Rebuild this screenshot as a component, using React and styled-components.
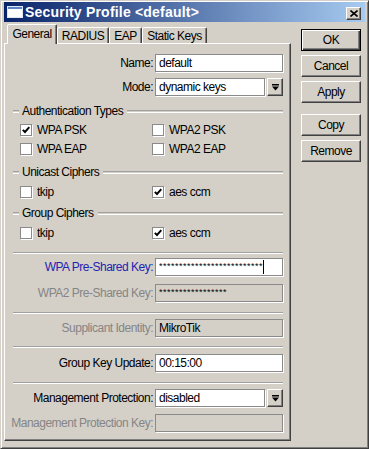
import React from 'react';
import styled, { createGlobalStyle } from 'styled-components';

const GlobalStyle = createGlobalStyle`
  html, body {
    margin: 0;
    padding: 0;
    background: #d4d0c8;
  }
  body {
    font-family: "Liberation Sans", Arial, sans-serif;
    font-size: 12px;
    letter-spacing: -0.5px;
    color: #000;
  }
`;

const Window = styled.div`
  width: 369px;
  height: 449px;
  box-sizing: border-box;
  background: #d4d0c8;
  border: 1px solid;
  border-color: #d4d0c8 #404040 #404040 #d4d0c8;
  box-shadow: inset 1px 1px 0 #fff, inset -1px -1px 0 #808080;
  padding: 1px 3px 3px 3px;
  display: flex;
  flex-direction: column;
`;

const TitleBar = styled.div`
  height: 20px;
  display: flex;
  align-items: center;
  padding-left: 3px;
  padding-right: 4px;
  background: linear-gradient(to right, #0a246a, #a6caf0);
`;

const TitleText = styled.span`
  flex: 1;
  margin-left: 2px;
  color: #fff;
  font-weight: bold;
  font-size: 14px;
  letter-spacing: 0.2px;
`;

const CloseButton = styled.div`
  width: 15px;
  height: 13px;
  box-sizing: border-box;
  margin-top: 3px;
  background: #d4d0c8;
  border: 1px solid;
  border-color: #fff #404040 #404040 #fff;
  box-shadow: inset -1px -1px 0 #808080;
  display: flex;
  align-items: center;
  justify-content: center;
`;

const Body = styled.div`
  display: flex;
  padding-top: 2px;
`;

const LeftColumn = styled.div`
  width: 287px;
  display: flex;
  flex-direction: column;
`;

const TabStrip = styled.div`
  height: 19px;
  display: flex;
  align-items: flex-end;
  padding-left: 3px;
`;

const Tab = styled.div`
  width: ${(p) => p.$w}px;
  height: ${(p) => (p.$active ? 20 : 16)}px;
  box-sizing: border-box;
  margin-bottom: ${(p) => (p.$active ? -1 : 0)}px;
  position: relative;
  z-index: ${(p) => (p.$active ? 1 : 0)};
  background: #d4d0c8;
  border: 1px solid;
  border-bottom: none;
  border-color: #fff #404040 transparent #fff;
  border-radius: 2px 2px 0 0;
  box-shadow: inset -1px 0 0 #808080;
  display: flex;
  align-items: center;
  justify-content: center;
  padding-bottom: ${(p) => (p.$active ? 2 : 0)}px;
`;

const Panel = styled.div`
  height: 398px;
  box-sizing: border-box;
  border: 1px solid;
  border-color: #fff #404040 #404040 #fff;
  box-shadow: inset -1px -1px 0 #808080;
  padding: 10px 7px 0 0;
  display: flex;
  flex-direction: column;
`;

const Row = styled.div`
  display: flex;
  align-items: center;
  height: 18px;
  margin-top: ${(p) => p.$mt}px;
`;

const Label = styled.div`
  width: 148px;
  margin-right: 2px;
  text-align: right;
  white-space: nowrap;
  color: ${(p) => (p.$tone === 'blue' ? '#2323b4' : p.$tone === 'gray' ? '#858585' : '#000')};
`;

const Field = styled.div`
  flex: 1;
  height: 18px;
  box-sizing: border-box;
  background: ${(p) => (p.$disabled ? '#d4d0c8' : '#fff')};
  border: 1px solid #8a8a8a;
  box-shadow: 1px 1px 0 #fff;
  padding-left: 3px;
  display: flex;
  align-items: center;
  white-space: nowrap;
  overflow: hidden;
`;

const Stars = styled.span`
  font-size: 9px;
  letter-spacing: 0.5px;
  line-height: 9px;
  margin-top: -2px;
`;

const Caret = styled.span`
  width: 1px;
  height: 14px;
  background: #000;
`;

const DropButton = styled.div`
  width: 16px;
  height: 18px;
  box-sizing: border-box;
  margin-left: 2px;
  border: 1px solid;
  border-color: #fff #404040 #404040 #fff;
  box-shadow: inset -1px -1px 0 #808080;
  display: flex;
  align-items: center;
  justify-content: center;
`;

const Heading = styled.div`
  display: flex;
  align-items: center;
  height: 14px;
  margin-top: ${(p) => p.$mt}px;
  padding-left: 8px;
`;

const Etch = styled.div`
  height: 1px;
  border-top: 1px solid #a0a0a0;
  border-bottom: 1px solid #fff;
  width: ${(p) => (p.$grow ? 'auto' : '6px')};
  flex: ${(p) => (p.$grow ? 1 : 'none')};
`;

const HeadingText = styled.span`
  margin: 0 4px 0 3px;
  white-space: nowrap;
`;

const Separator = styled.div`
  margin-top: ${(p) => p.$mt}px;
  margin-left: 8px;
  height: 0;
  border-top: 1px solid #a0a0a0;
  border-bottom: 1px solid #fff;
`;

const CheckRow = styled.div`
  display: grid;
  grid-template-columns: 132px auto;
  padding-left: 15px;
  height: 13px;
  margin-top: ${(p) => p.$mt}px;
`;

const CheckItem = styled.div`
  display: flex;
  align-items: center;
  gap: 5px;
`;

const Box = styled.div`
  width: 12px;
  height: 12px;
  box-sizing: border-box;
  background: #fff;
  border: 1px solid #8a8a8a;
  box-shadow: 1px 1px 0 #fff;
  display: flex;
  align-items: center;
  justify-content: center;
`;

const RightColumn = styled.div`
  width: 60px;
  margin-left: 10px;
  padding-top: 5px;
  display: flex;
  flex-direction: column;
`;

const Button = styled.div`
  height: 22px;
  box-sizing: border-box;
  margin-top: ${(p) => p.$mt}px;
  border: 1px solid;
  border-color: ${(p) => (p.$default ? '#000' : '#fff #404040 #404040 #fff')};
  box-shadow: ${(p) => (p.$default
    ? 'inset 1px 1px 0 #fff, inset -1px -1px 0 #404040, inset -2px -2px 0 #808080'
    : 'inset -1px -1px 0 #808080')};
  display: flex;
  align-items: center;
  justify-content: center;
`;

const WindowIcon = () => (
  <svg width="16" height="12" viewBox="0 0 16 12">
    <rect x="0.5" y="0.5" width="15" height="11" fill="#fff" stroke="#dfe8f5" />
    <rect x="1" y="1" width="14" height="2" fill="#5a86c8" />
  </svg>
);

const CloseIcon = () => (
  <svg width="8" height="7" viewBox="0 0 8 7">
    <path d="M0.5 0.5 L7.5 6.5 M7.5 0.5 L0.5 6.5" stroke="#000" strokeWidth="1.6" />
  </svg>
);

const DropIcon = () => (
  <svg width="7" height="7" viewBox="0 0 7 7">
    <rect x="0" y="0" width="7" height="1.5" fill="#000" />
    <polygon points="0,2.5 7,2.5 3.5,6.5" fill="#000" />
  </svg>
);

const CheckIcon = () => (
  <svg width="8" height="8" viewBox="0 0 8 8">
    <path d="M0.8 3.8 L3 6 L7.3 1.2" stroke="#000" strokeWidth="1.9" fill="none" />
  </svg>
);

const Check = ({ label, checked }) => (
  <CheckItem>
    <Box>{checked && <CheckIcon />}</Box>
    <span>{label}</span>
  </CheckItem>
);

const Group = ({ title, mt }) => (
  <Heading $mt={mt}>
    <Etch />
    <HeadingText>{title}</HeadingText>
    <Etch $grow />
  </Heading>
);

const tabs = [
  { name: 'General', w: 50, active: true },
  { name: 'RADIUS', w: 52 },
  { name: 'EAP', w: 33 },
  { name: 'Static Keys', w: 65 },
];

const buttons = [
  { name: 'OK', mt: 0, isDefault: true },
  { name: 'Cancel', mt: 4 },
  { name: 'Apply', mt: 4 },
  { name: 'Copy', mt: 11 },
  { name: 'Remove', mt: 4 },
];

export default function App() {
  return (
    <>
      <GlobalStyle />
      <Window>
        <TitleBar>
          <WindowIcon />
          <TitleText>Security Profile &lt;default&gt;</TitleText>
          <CloseButton><CloseIcon /></CloseButton>
        </TitleBar>
        <Body>
          <LeftColumn>
            <TabStrip>
              {tabs.map((t) => (
                <Tab key={t.name} $w={t.w} $active={t.active}>{t.name}</Tab>
              ))}
            </TabStrip>
            <Panel>
              <Row $mt={0}>
                <Label>Name:</Label>
                <Field>default</Field>
              </Row>
              <Row $mt={6}>
                <Label>Mode:</Label>
                <Field>dynamic keys</Field>
                <DropButton><DropIcon /></DropButton>
              </Row>

              <Group title="Authentication Types" mt={8} />
              <CheckRow $mt={5}>
                <Check label="WPA PSK" checked />
                <Check label="WPA2 PSK" />
              </CheckRow>
              <CheckRow $mt={6}>
                <Check label="WPA EAP" />
                <Check label="WPA2 EAP" />
              </CheckRow>

              <Group title="Unicast Ciphers" mt={10} />
              <CheckRow $mt={6}>
                <Check label="tkip" />
                <Check label="aes ccm" checked />
              </CheckRow>

              <Group title="Group Ciphers" mt={8} />
              <CheckRow $mt={6}>
                <Check label="tkip" />
                <Check label="aes ccm" checked />
              </CheckRow>

              <Separator $mt={13} />
              <Row $mt={4}>
                <Label $tone="blue">WPA Pre-Shared Key:</Label>
                <Field>
                  <Stars>**************************</Stars>
                  <Caret />
                </Field>
              </Row>
              <Row $mt={8}>
                <Label $tone="gray">WPA2 Pre-Shared Key:</Label>
                <Field $disabled><Stars>*****************</Stars></Field>
              </Row>

              <Separator $mt={10} />
              <Row $mt={5}>
                <Label $tone="gray">Supplicant Identity:</Label>
                <Field $disabled>MikroTik</Field>
              </Row>

              <Separator $mt={9} />
              <Row $mt={6}>
                <Label>Group Key Update:</Label>
                <Field>00:15:00</Field>
              </Row>

              <Separator $mt={10} />
              <Row $mt={5}>
                <Label>Management Protection:</Label>
                <Field>disabled</Field>
                <DropButton><DropIcon /></DropButton>
              </Row>
              <Row $mt={7}>
                <Label $tone="gray">Management Protection Key:</Label>
                <Field $disabled />
              </Row>
            </Panel>
          </LeftColumn>
          <RightColumn>
            {buttons.map((b) => (
              <Button key={b.name} $mt={b.mt} $default={b.isDefault}>{b.name}</Button>
            ))}
          </RightColumn>
        </Body>
      </Window>
    </>
  );
}
